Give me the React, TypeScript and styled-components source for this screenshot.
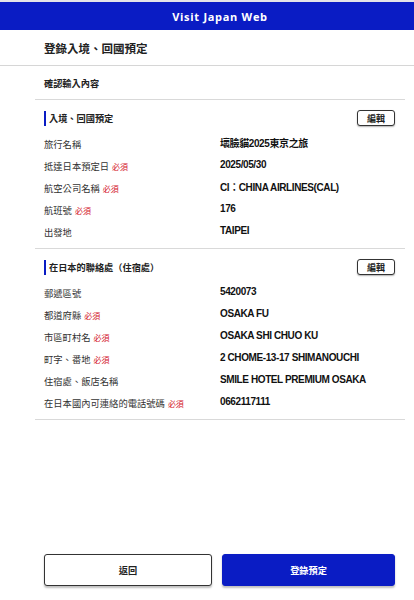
import React from "react";
import styled, { createGlobalStyle } from "styled-components";

const GlobalStyle = createGlobalStyle`
  html, body { margin: 0; padding: 0; background: #fff; }
  body {
    font-family: "Noto Sans CJK TC", "Noto Sans", sans-serif;
    color: #222;
  }
  * { box-sizing: border-box; }
`;

const Page = styled.div`
  display: flex;
  flex-direction: column;
  min-height: 600px;
  border-top: 2px solid #e4e4e8;
`;

const TopBar = styled.header`
  height: 28px;
  padding-left: 26px;
  background: #0a1cc4;
  color: #fff;
  display: flex;
  align-items: center;
  justify-content: center;
  font-family: "Open Sans", "Noto Sans", sans-serif;
  font-weight: 700;
  font-size: 11px;
  letter-spacing: 0.7px;
`;

const PageTitle = styled.h1`
  margin: 0;
  height: 36px;
  padding: 0 44px;
  display: flex;
  align-items: center;
  font-size: 11.5px;
  font-weight: 700;
  border-bottom: 1.5px solid #d6d6d6;
`;

const Body = styled.main`
  padding: 0 9px 0 35px;
`;

const Intro = styled.div`
  height: 34px;
  padding-left: 9px;
  display: flex;
  align-items: center;
  font-size: 9.2px;
  font-weight: 700;
  border-bottom: 1px solid #d9d9d9;
`;

const Section = styled.section`
  padding: 9px 10px 6px 9px;
  border-bottom: 1px solid #d9d9d9;
`;

const SectionHead = styled.div`
  display: flex;
  align-items: center;
  justify-content: space-between;
  height: 18px;
  margin-bottom: 5px;
`;

const SectionTitle = styled.h2`
  margin: 0;
  border-left: 2.5px solid #0a1cc4;
  padding-left: 3px;
  font-size: 9.2px;
  font-weight: 700;
  line-height: 15px;
`;

const EditButton = styled.button`
  width: 38px;
  height: 16px;
  padding: 0;
  border: 1px solid #333;
  border-radius: 3px;
  background: #fff;
  box-shadow: 0 1px 1.5px rgba(0, 0, 0, 0.3);
  font-family: inherit;
  font-size: 9px;
  font-weight: 700;
  color: #222;
`;

const Row = styled.div`
  display: grid;
  grid-template-columns: 176px 1fr;
  align-items: center;
  height: 22px;
`;

const Label = styled.span`
  font-size: 9.3px;
  color: #333;
  padding-top: 2px;
`;

const Required = styled.span`
  margin-left: 3px;
  font-size: 8px;
  color: #d3121f;
`;

const Value = styled.span`
  font-family: "Liberation Sans", "Noto Sans CJK TC", sans-serif;
  font-size: 10px;
  letter-spacing: -0.4px;
  font-weight: 700;
  color: #111;
  padding-bottom: 2px;
`;

const Footer = styled.footer`
  margin-top: auto;
  display: grid;
  grid-template-columns: 168px 1fr;
  gap: 10px;
  padding: 0 19px 14px 44px;
`;

const ActionButton = styled.button<{ $primary?: boolean }>`
  height: 32px;
  border-radius: 3px;
  border: 1px solid ${(p) => (p.$primary ? "#0a1cc4" : "#333")};
  background: ${(p) => (p.$primary ? "#0a1cc4" : "#fff")};
  color: ${(p) => (p.$primary ? "#fff" : "#222")};
  box-shadow: 0 1.5px 2px rgba(0, 0, 0, 0.25);
  font-family: inherit;
  font-size: 9.2px;
  font-weight: 700;
`;

type Field = { label: string; value: string; required?: boolean };

const trip: Field[] = [
  { label: "旅行名稱", value: "壞臉貓2025東京之旅" },
  { label: "抵達日本預定日", value: "2025/05/30", required: true },
  { label: "航空公司名稱", value: "CI：CHINA AIRLINES(CAL)", required: true },
  { label: "航班號", value: "176", required: true },
  { label: "出發地", value: "TAIPEI" },
];

const stay: Field[] = [
  { label: "郵遞區號", value: "5420073" },
  { label: "都道府縣", value: "OSAKA FU", required: true },
  { label: "市區町村名", value: "OSAKA SHI CHUO KU", required: true },
  { label: "町字、番地", value: "2 CHOME-13-17 SHIMANOUCHI", required: true },
  { label: "住宿處、飯店名稱", value: "SMILE HOTEL PREMIUM OSAKA" },
  { label: "在日本國內可連絡的電話號碼", value: "0662117111", required: true },
];

const InfoSection: React.FC<{ title: string; fields: Field[] }> = ({ title, fields }) => (
  <Section>
    <SectionHead>
      <SectionTitle>{title}</SectionTitle>
      <EditButton>編輯</EditButton>
    </SectionHead>
    {fields.map((f) => (
      <Row key={f.label}>
        <Label>
          {f.label}
          {f.required && <Required>必須</Required>}
        </Label>
        <Value>{f.value}</Value>
      </Row>
    ))}
  </Section>
);

export default function App() {
  return (
    <>
      <GlobalStyle />
      <Page>
        <TopBar>Visit Japan Web</TopBar>
        <PageTitle>登錄入境、回國預定</PageTitle>
        <Body>
          <Intro>確認輸入內容</Intro>
          <InfoSection title="入境、回國預定" fields={trip} />
          <InfoSection title="在日本的聯絡處（住宿處）" fields={stay} />
        </Body>
        <Footer>
          <ActionButton>返回</ActionButton>
          <ActionButton $primary>登錄預定</ActionButton>
        </Footer>
      </Page>
    </>
  );
}
